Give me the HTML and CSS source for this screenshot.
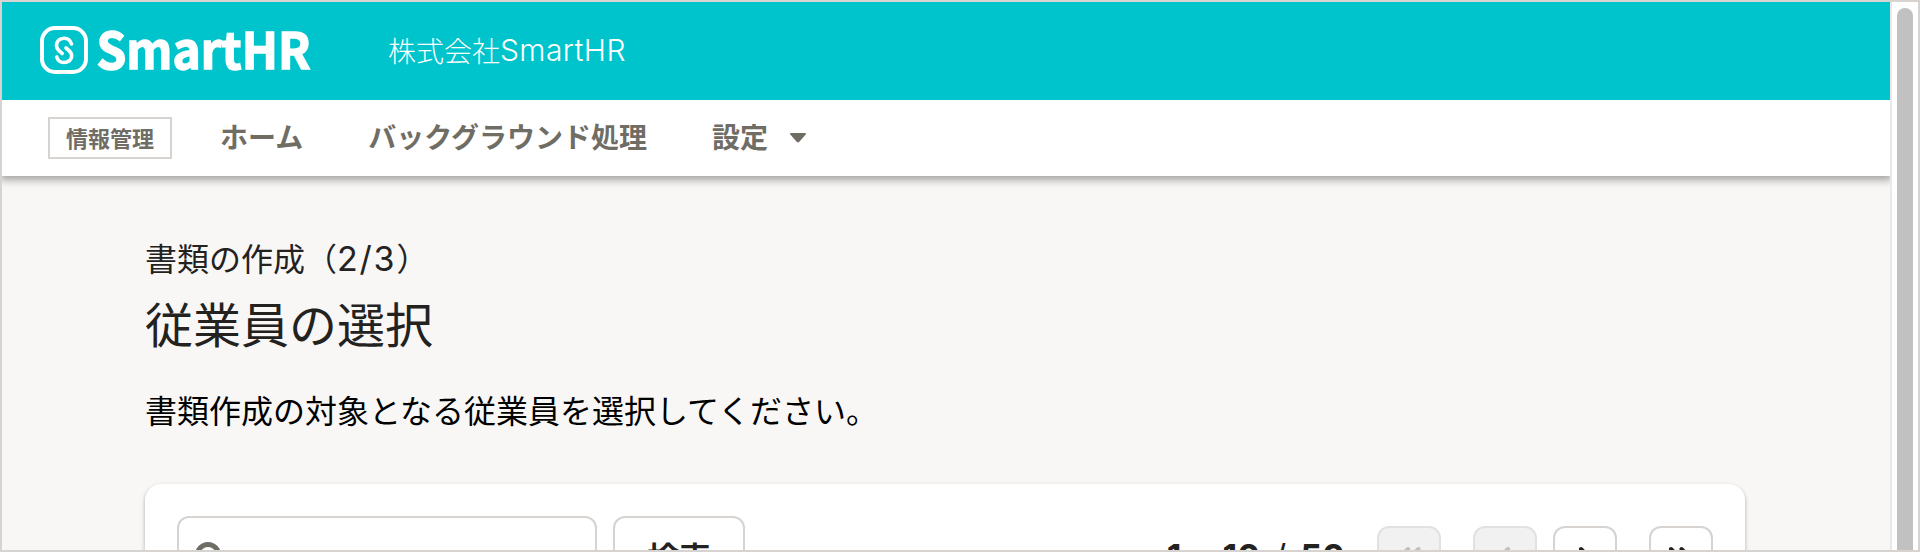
FILE: index.html
```html
<!DOCTYPE html>
<html lang="ja">
<head>
<meta charset="utf-8">
<title>従業員の選択</title>
<link rel="stylesheet" href="styles.css">
</head>
<body>
<div class="frame">
  <div class="page">
    <header class="header">
      <svg class="logo" width="272" height="50" viewBox="0 0 272 50" fill="none">
        <rect x="2" y="3" width="44" height="44" rx="13" stroke="#fff" stroke-width="4"/>
        <path d="M31.500 19C30.500 15.500 27.500 13.200 24 13.200C19.500 13.200 16.500 16.500 16.500 20.500C16.500 25 20 26 22.200 28.500M26 23C29 25.500 31.700 27 31.700 31C31.700 35 28 37.500 24 37.500C20.500 37.500 17.500 35.500 16.800 32" stroke="#fff" stroke-width="3.600" stroke-linecap="round"/>
        <text class="wordmark" x="56.500" y="43.500" textLength="214" lengthAdjust="spacingAndGlyphs">SmartHR</text>
      </svg>
      <div class="company">株式会社<span class="company-latin">SmartHR</span></div>
    </header>
    <nav class="nav">
      <span class="badge">情報管理</span>
      <a class="nav-item nav-home">ホーム</a>
      <a class="nav-item nav-jobs">バックグラウンド処理</a>
      <a class="nav-item nav-settings">設定
        <svg class="caret" width="18" height="12" viewBox="0 0 18 12"><path d="M2 1H16Q18 1 16.500 2.800L10.300 9.800Q9 11 7.700 9.800L1.500 2.800Q0 1 2 1Z" fill="#706d65"/></svg>
      </a>
    </nav>
    <main class="main">
      <p class="step">書類の作成（<span class="step-count">2/3</span>）</p>
      <h1 class="title">従業員の選択</h1>
      <p class="lead">書類作成の対象となる従業員を選択してください。</p>
      <section class="card">
        <div class="search-input">
          <svg width="32" height="32" viewBox="0 0 32 32" fill="none" stroke="#706d65" stroke-width="5"><circle cx="13" cy="13" r="10.500"/><path d="M21 21L30 30"/></svg>
        </div>
        <button class="search-button">検索</button>
        <div class="pager">
          <span class="count"><span>1</span><span>–</span><span>10</span><span class="slash">/</span><span>50</span></span>
          <span class="page-button disabled first"><svg width="28" height="28" viewBox="0 0 28 28"><path d="M13 5L4 14L13 23M23.500 5L14.500 14L23.500 23"/></svg></span>
          <span class="page-button disabled prev"><svg width="28" height="28" viewBox="0 0 28 28"><path d="M17 5L8 14L17 23"/></svg></span>
          <span class="page-button next"><svg width="28" height="28" viewBox="0 0 28 28"><path d="M10 5L19 14L10 23"/></svg></span>
          <span class="page-button last"><svg width="28" height="28" viewBox="0 0 28 28"><path d="M4 5L13 14L4 23M14.500 5L23.500 14L14.500 23"/></svg></span>
        </div>
      </section>
    </main>
  </div>
  <div class="scrollbar"><div class="thumb"></div></div>
</div>
</body>
</html>
```
FILE: styles.css
```css
* { box-sizing: border-box; margin: 0; padding: 0; }
body { width: 1920px; height: 552px; overflow: hidden; font-family: "Noto Sans CJK JP", sans-serif; color: #23221e; }
.frame { width: 1920px; height: 552px; border: 2px solid #d6d3d0; display: flex; overflow: hidden; }
.page { width: 1888px; height: 548px; overflow: hidden; background: #f8f7f6; display: flex; flex-direction: column; }
.header { position: relative; z-index: 1; flex: none; height: 98px; background: #00c4cc; display: flex; align-items: center; padding-left: 38px; color: #fff; }
.logo { flex: none; margin-top: -2px; overflow: visible; }
.wordmark { font-size: 50px; font-weight: 700; fill: #fff; stroke: #fff; stroke-width: 1.5px; }
.company { margin-left: 76px; margin-top: -2px; font-size: 28px; line-height: 40px; font-weight: 300; display: flex; }
.company-latin { font-family: Inter, "Noto Sans CJK JP", sans-serif; font-size: 30px; letter-spacing: 0.4px; }
.nav { flex: none; height: 76px; background: #fff; box-shadow: 0 2px 8px 2px rgba(3, 3, 2, 0.35); display: flex; align-items: center; padding-left: 46px; color: #706d65; font-weight: 700; }
.badge { width: 124px; height: 42px; border: 2px solid #d6d3d0; font-size: 22px; line-height: 36px; text-align: center; }
.nav-item { font-size: 28px; line-height: 40px; margin-top: -4px; white-space: nowrap; }
.nav-home { margin-left: 48px; }
.nav-jobs { margin-left: 65px; }
.nav-settings { margin-left: 65px; display: flex; align-items: center; gap: 21px; }
.caret { margin-top: 4px; }
.main { flex: 1; padding: 57px 143px 0; }
.step { font-size: 32px; line-height: 48px; font-weight: 400; }
.step-count { font-family: Inter, "Noto Sans CJK JP", sans-serif; font-size: 34px; letter-spacing: 1.8px; }
.title { font-size: 48px; line-height: 60px; font-weight: 400; margin-top: 9px; }
.lead { font-size: 32px; line-height: 48px; color: #000; margin-top: 33px; }
.card { width: 1600px; height: 140px; margin-top: 51px; border-radius: 16px; background: #fff; box-shadow: 0 2px 4px rgba(3, 3, 2, 0.3); display: flex; align-items: flex-start; padding: 32px 32px 0; }
.search-input { width: 420px; height: 80px; border: 2px solid #d6d3d0; border-radius: 12px; padding: 24px 16px; }
.search-button { width: 132px; height: 80px; margin-left: 16px; border: 2px solid #d6d3d0; border-radius: 12px; background: #fff; font: 700 32px/76px "Noto Sans CJK JP", sans-serif; color: #23221e; }
.pager { margin-left: auto; margin-top: 10px; display: flex; align-items: center; }
.count { font: 700 34px/62px Inter, sans-serif; height: 64px; margin-right: 32px; display: flex; gap: 12px; }
.slash { font-weight: 400; margin: 0 2px; }
.page-button { width: 64px; height: 64px; border: 2px solid #d6d3d0; border-radius: 12px; display: flex; align-items: center; justify-content: center; }
.page-button path { fill: none; stroke: #23221e; stroke-width: 4px; stroke-linecap: round; }
.disabled { background: #f1f1f1; border-color: #e2e1e0; }
.disabled path { stroke: #c1bdb7; }
.prev, .last { margin-left: 32px; }
.next { margin-left: 16px; }
.scrollbar { width: 28px; border-left: 2px solid #e8e8e8; background: #fff; padding: 6px 5px 0; }
.thumb { width: 16px; height: 560px; border-radius: 8px; background: #c1c1c1; }
```
